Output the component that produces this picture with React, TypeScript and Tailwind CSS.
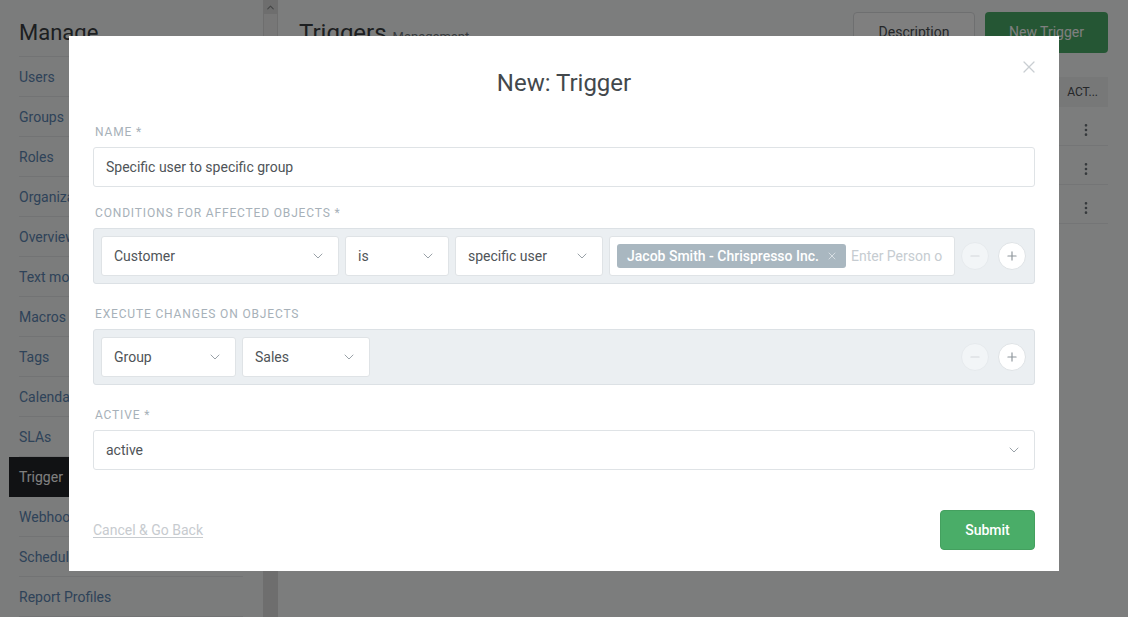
import { ChevronDown, X, Minus, Plus, MoreVertical } from 'lucide-react';

const NAV = [
  'Users', 'Groups', 'Roles', 'Organizations', 'Overviews', 'Text modules', 'Macros',
  'Tags', 'Calendars', 'SLAs', 'Trigger', 'Webhooks', 'Scheduler', 'Report Profiles',
];

function Select({ label, width, full }: { label: string; width?: string; full?: boolean }) {
  return (
    <div
      className={`h-10 bg-white border border-[#dfe3e6] rounded-[3px] flex items-center justify-between pl-3 pr-3 shrink-0 ${full ? 'w-full' : width}`}
    >
      <span className="text-[14px] text-[#4f5458]">{label}</span>
      <ChevronDown size={16} strokeWidth={1.5} className="text-[#9aa2a8]" />
    </div>
  );
}

function RowButtons() {
  return (
    <div className="flex items-center gap-[9px] ml-auto">
      <div className="w-7 h-7 rounded-full bg-[#f2f5f7] border border-[#e6eaed] flex items-center justify-center">
        <Minus size={14} strokeWidth={2} className="text-[#d3d8dc]" />
      </div>
      <div className="w-7 h-7 rounded-full bg-white border border-[#dfe3e6] flex items-center justify-center">
        <Plus size={14} strokeWidth={2} className="text-[#8d959b]" />
      </div>
    </div>
  );
}

function Label({ children }: { children: React.ReactNode }) {
  return (
    <div className="h-4 mb-2 pl-[2px] text-[12px] leading-[18px] uppercase tracking-[0.07em] text-[#a7b1b9]">{children}</div>
  );
}

export default function App() {
  return (
    <div
      className="relative w-[1128px] h-[617px] overflow-hidden flex bg-[#f9fafa]"
      style={{ fontFamily: 'Roboto, "Noto Sans", sans-serif' }}
    >
      {/* sidebar */}
      <div className="w-[263px] shrink-0 bg-[#f7f8f8] pl-[19px] pr-5">
        <h2 className="h-[57px] flex items-center pt-[9px] text-[22px] text-[#3a3e42] border-b border-[#e4e7e9]">Manage</h2>
        {NAV.map((n) => (
          <div
            key={n}
            className={
              n === 'Trigger'
                ? 'h-10 -ml-[10px] pl-[10px] flex items-center text-[14px] bg-[#222428] text-white'
                : 'h-10 pt-[2px] flex items-center text-[14px] text-[#5d86b3] border-b border-[#e4e7e9]'
            }
          >
            {n}
          </div>
        ))}
      </div>

      {/* scrollbar */}
      <div className="w-[15px] shrink-0 bg-[#dcdddd] flex flex-col">
        <div className="h-[14px] flex items-center justify-center text-[#8a8c8d]">
          <ChevronDown size={11} strokeWidth={2.5} className="rotate-180" />
        </div>
        <div className="h-[480px] mx-[1px] bg-[#efefef]" />
      </div>

      {/* main */}
      <div className="flex-1 pl-[21px] pr-5 pt-3">
        <div className="flex items-start justify-between">
          <div className="flex items-baseline gap-[6px] pt-[3px]">
            <span className="text-[24px] text-[#3a3e42]">Triggers</span>
            <span className="text-[13px] text-[#6b7378]">Management</span>
          </div>
          <div className="flex gap-[10px]">
            <div className="w-[122px] h-[41px] bg-white border border-[#dcdfe1] rounded-[4px] flex items-center justify-center text-[14px] text-[#4a4f53]">
              Description
            </div>
            <div className="w-[123px] h-[41px] bg-[#4aad68] rounded-[4px] flex items-center justify-center text-[14px] text-white">
              New Trigger
            </div>
          </div>
        </div>
        <div className="mt-[24px] h-[30px] bg-[#eef0f1] flex items-center justify-end pr-[10px] text-[12px] text-[#4a4f53]">
          ACT...
        </div>
        {[0, 1, 2].map((i) => (
          <div key={i} className="h-[39px] pt-[8px] border-b border-[#e8eaec] flex items-center justify-end pr-[14px]">
            <MoreVertical size={16} className="text-[#6b7378]" />
          </div>
        ))}
      </div>

      {/* backdrop */}
      <div className="absolute inset-0 bg-black/50" />

      {/* modal */}
      <div className="absolute left-[69px] top-[36px] w-[990px] h-[535px] bg-white px-6 flex flex-col">
        <button className="absolute right-[20px] top-[21px] text-[#c9ced2]">
          <X size={20} strokeWidth={1.5} />
        </button>
        <h1 className="pt-[30px] h-[64px] text-center text-[24px] leading-[34px] text-[#43484c]">New: Trigger</h1>

        <div className="mt-[23px]">
          <Label>Name *</Label>
          <div className="h-10 border border-[#dfe3e6] rounded-[3px] flex items-center px-3 text-[14px] text-[#4f5458]">
            Specific user to specific group
          </div>
        </div>

        <div className="mt-[17px]">
          <Label>Conditions for affected objects *</Label>
          <div className="h-14 bg-[#ebeff2] border border-[#dce1e5] rounded-[3px] pl-[7px] pr-[8px] flex items-center gap-[6px]">
            <Select label="Customer" width="w-[238px]" />
            <Select label="is" width="w-[104px]" />
            <Select label="specific user" width="w-[148px]" />
            <div className="w-[346px] h-10 bg-white border border-[#dfe3e6] rounded-[3px] flex items-center pl-[7px] gap-[5px] overflow-hidden">
              <div className="h-6 bg-[#a9b7c0] rounded-[3px] flex items-center pl-[10px] pr-[8px] gap-[7px] shrink-0">
                <span className="text-[14px] font-medium text-white">Jacob Smith - Chrispresso Inc.</span>
                <X size={12} strokeWidth={2} className="text-[#d6dde2]" />
              </div>
              <span className="text-[14px] text-[#c6ccd1] whitespace-nowrap">Enter Person o</span>
            </div>
            <RowButtons />
          </div>
        </div>

        <div className="mt-[21px]">
          <Label>Execute changes on objects</Label>
          <div className="h-14 bg-[#ebeff2] border border-[#dce1e5] rounded-[3px] pl-[7px] pr-[8px] flex items-center gap-[6px]">
            <Select label="Group" width="w-[135px]" />
            <Select label="Sales" width="w-[128px]" />
            <RowButtons />
          </div>
        </div>

        <div className="mt-[21px]">
          <Label>Active *</Label>
          <Select label="active" full />
        </div>

        <div className="mt-10 flex items-center justify-between">
          <span className="text-[14px] text-[#c7cbcf] underline underline-offset-2">Cancel &amp; Go Back</span>
          <div className="w-[95px] h-10 bg-[#4aad68] border border-[#44a05f] rounded-[4px] flex items-center justify-center text-[14px] font-medium text-white">
            Submit
          </div>
        </div>
      </div>
    </div>
  );
}
